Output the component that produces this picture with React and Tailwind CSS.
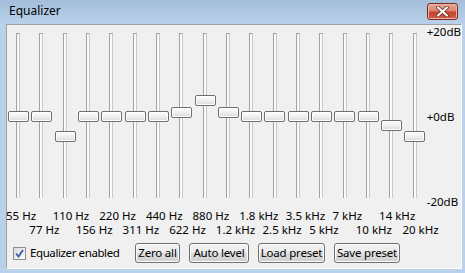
import React from 'react';

const bands = [
  { label: '55 Hz', top: 111 },
  { label: '77 Hz', top: 111 },
  { label: '110 Hz', top: 131 },
  { label: '156 Hz', top: 111 },
  { label: '220 Hz', top: 111 },
  { label: '311 Hz', top: 111 },
  { label: '440 Hz', top: 111 },
  { label: '622 Hz', top: 107 },
  { label: '880 Hz', top: 95 },
  { label: '1.2 kHz', top: 107 },
  { label: '1.8 kHz', top: 111 },
  { label: '2.5 kHz', top: 111 },
  { label: '3.5 kHz', top: 111 },
  { label: '5 kHz', top: 111 },
  { label: '7 kHz', top: 111 },
  { label: '10 kHz', top: 111 },
  { label: '14 kHz', top: 120 },
  { label: '20 kHz', top: 131 },
];

function Slider({ top }) {
  return (
    <div className="relative h-[184px] flex justify-center pt-[8px] pl-[1px]">
      {/* channel */}
      <div className="w-[4px] h-[165px] border-l border-t border-[#a2a2a2] bg-[#fafafa] border-r border-r-[#c9c9c9]" />
      {/* thumb */}
      <div
        className="absolute left-[2px] w-[21px] h-[11px] rounded-[2px] border border-[#6f6f6f] bg-gradient-to-b from-[#fdfdfd] via-[#efefef] to-[#d9d9d9] shadow-[inset_0_0_0_1px_#ffffff]"
        style={{ top: top - 25 }}
      />
    </div>
  );
}

function Button({ children, w }) {
  return (
    <div
      className={`${w} h-[20px] flex items-center justify-center rounded-[3px] border border-[#707070] bg-[linear-gradient(to_bottom,#f2f2f2_0%,#ebebeb_50%,#dddddd_51%,#cfcfcf_100%)] shadow-[inset_0_0_0_1px_#fbfbfb] whitespace-nowrap tracking-[-0.2px]`}
    >
      {children}
    </div>
  );
}

export default function App() {
  return (
    <div className="w-[465px] h-[273px] bg-[#b9d1ea] flex flex-col font-['Noto_Sans',sans-serif] text-[11.5px] leading-[14px] text-black overflow-hidden">
      {/* title bar */}
      <div className="h-[24px] flex items-center justify-between pl-[9px] pr-[7px] bg-gradient-to-b from-[#a4bedb] to-[#b9d1ea]">
        <span className="text-[12px] pb-[2px]">Equalizer</span>
        <div className="w-[31px] h-[17px] mb-[2px] rounded-[3px] border border-[#7b2b20] bg-[linear-gradient(to_bottom,#e9a99a_0%,#d98371_45%,#c2452d_55%,#cf5e45_100%)] shadow-[inset_0_0_0_1px_#eeb3a6] flex items-center justify-center">
          <svg width="13" height="11" viewBox="0 0 13 11">
            <path d="M2 1.5 L11 9.5 M11 1.5 L2 9.5" stroke="#5a1f17" strokeWidth="3.6" strokeLinecap="round" />
            <path d="M2 1.5 L11 9.5 M11 1.5 L2 9.5" stroke="#ffffff" strokeWidth="2.2" strokeLinecap="round" />
          </svg>
        </div>
      </div>

      {/* client area */}
      <div className="ml-[6px] w-[456px] h-[245px] bg-[#f0f0f0] border-t border-l border-[#a0a0a0] border-r border-b border-r-white border-b-white flex flex-col">
        <div className="flex">
          <div className="w-[420px] ml-[-1px]">
            <div className="grid grid-cols-18">
              {bands.map((b, i) => (
                <Slider key={i} top={b.top} />
              ))}
            </div>
            <div className="grid grid-cols-18 h-[14px]">
              {bands.map((b, i) => (
                <div key={i} className="whitespace-nowrap overflow-visible">
                  {i % 2 === 0 ? b.label : ''}
                </div>
              ))}
            </div>
            <div className="grid grid-cols-18 h-[14px]">
              {bands.map((b, i) => (
                <div key={i} className="whitespace-nowrap overflow-visible">
                  {i % 2 === 1 ? b.label : ''}
                </div>
              ))}
            </div>
          </div>
          <div className="h-[184px] flex flex-col justify-between pl-[1px]">
            <span>+20dB</span>
            <span>+0dB</span>
            <span>-20dB</span>
          </div>
        </div>

        <div className="mt-[6px] flex items-center pl-[6px]">
          <div className="w-[13px] h-[13px] border border-[#8e8f8f] bg-gradient-to-br from-[#dcdcdc] to-[#fafafa] flex items-center justify-center">
            <svg width="9" height="9" viewBox="0 0 9 9">
              <path d="M1 4.5 L3.5 7.5 L8 1" fill="none" stroke="#3d5b9a" strokeWidth="1.8" />
            </svg>
          </div>
          <span className="ml-[4px] w-[105px] whitespace-nowrap tracking-[-0.4px]">Equalizer enabled</span>
          <div className="flex gap-[9px]">
            <Button w="w-[45px]">Zero all</Button>
            <Button w="w-[60px]">Auto level</Button>
            <Button w="w-[67px]">Load preset</Button>
            <Button w="w-[66px]">Save preset</Button>
          </div>
        </div>
      </div>
    </div>
  );
}
